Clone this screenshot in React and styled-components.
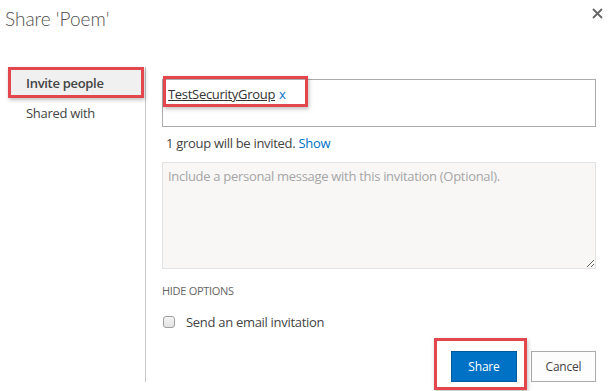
import React, { useState } from "react";
import styled, { createGlobalStyle } from "styled-components";

const GlobalStyle = createGlobalStyle`
    html, body {
        margin: 0;
        padding: 0;
        background: #fff;
        width: 611px;
        height: 391px;
        overflow: hidden;
    }

    body {
        font-family: "Segoe UI", "Open Sans", sans-serif;
        letter-spacing: -0.3px;
        color: #444;
    }
`

const Dialog = styled.div`
    width: 611px;
    height: 391px;
    display: flex;
    flex-direction: column;
    box-sizing: border-box;
`

const Header = styled.div`
    height: 67px;
    display: flex;
    justify-content: space-between;
    align-items: flex-start;
    padding: 6px 8px 0 5px;
    box-sizing: border-box;
`

const Title = styled.h1`
    margin: 0;
    font-family: "Segoe UI Light", "Lato", sans-serif;
    font-size: 19px;
    font-weight: 300;
    letter-spacing: 0;
    line-height: 26px;
    color: #505050;
`

const CloseButton = styled.button`
    border: none;
    background: none;
    padding: 0;
    margin-top: 1px;
    width: 12px;
    height: 12px;
    display: flex;
    align-items: center;
    justify-content: center;
    cursor: pointer;
`

const Body = styled.div`
    display: flex;
    height: 315px;
`

const Nav = styled.nav`
    width: 145px;
    border-right: 1px solid #c6c6c6;
    display: flex;
    flex-direction: column;
`

const NavItem = styled.div`
    position: relative;
    margin-left: 8px;
    width: 136px;
    height: ${props => props.active ? "31px" : "29px"};
    padding-left: 18px;
    box-sizing: border-box;
    display: flex;
    align-items: center;
    font-size: 13px;
    font-weight: ${props => props.active ? 600 : 400};
    color: #444;
    background: ${props => props.active ? "#f0f0f0" : "transparent"};
`

const Highlight = styled.span`
    position: absolute;
    pointer-events: none;
    border: 3px solid #e2474d;
    box-sizing: border-box;
    box-shadow: 1px 2px 4px rgba(0, 0, 0, 0.25);
`

const Content = styled.div`
    flex: 1;
    padding: 12px 15px 0 16px;
    display: flex;
    flex-direction: column;
`

const PeopleBox = styled.div`
    position: relative;
    height: 48px;
    border: 1px solid #ababab;
    box-sizing: border-box;
    padding: 5px 5px;
    font-size: 13px;
    line-height: 18px;
`

const Token = styled.span`
    color: #333;
    text-decoration: underline;
`

const RemoveLink = styled.a`
    color: #0072c6;
    margin-left: 4px;
    text-decoration: none;
    cursor: pointer;
`

const Status = styled.div`
    margin-top: 6px;
    padding-left: 4px;
    font-size: 13px;
    line-height: 20px;
    color: #444;
`

const Link = styled.a`
    color: #0072c6;
    cursor: pointer;
`

const Message = styled.textarea`
    margin-top: 9px;
    height: 107px;
    box-sizing: border-box;
    border: 1px solid #e3e3e3;
    background: #f8f7f6;
    padding: 4px 5px;
    font-family: "Segoe UI", "Open Sans", sans-serif;
    font-size: 13px;
    letter-spacing: -0.3px;
    line-height: 18px;
    color: #444;
    resize: vertical;
    outline: none;

    &::placeholder {
        color: #a6a6a6;
    }
`

const OptionsToggle = styled.div`
    margin-top: 14px;
    font-size: 11px;
    line-height: 16px;
    color: #666;
    text-transform: uppercase;
`

const CheckRow = styled.label`
    margin-top: 13px;
    display: flex;
    align-items: center;
    font-size: 13px;
    line-height: 20px;
    color: #444;
`

const Check = styled.input`
    appearance: none;
    margin: 0 11px 0 1px;
    width: 12px;
    height: 12px;
    border: 1px solid #a0a0a0;
    border-radius: 3px;
    background: linear-gradient(#f4f4f4, #e2e2e2);
    box-sizing: border-box;
`

const ButtonRow = styled.div`
    margin-top: 19px;
    display: flex;
    justify-content: flex-end;
    gap: 14px;
`

const ButtonWrap = styled.span`
    position: relative;
    display: flex;
`

const Button = styled.button`
    width: ${props => props.primary ? "66px" : "65px"};
    height: 31px;
    font-family: "Segoe UI", "Open Sans", sans-serif;
    font-size: 12px;
    letter-spacing: -0.2px;
    border: 1px solid ${props => props.primary ? "#005a9e" : "#ababab"};
    background: ${props => props.primary ? "#0072c6" : "#fdfdfd"};
    color: ${props => props.primary ? "#fff" : "#444"};
    padding: 0;
    cursor: pointer;
`

function App() {
    const [message, setMessage] = useState("");
    const [sendEmail, setSendEmail] = useState(false);

    return (
        <Dialog>
            <GlobalStyle />
            <Header>
                <Title>Share 'Poem'</Title>
                <CloseButton aria-label="Close">
                    <svg width="11" height="11" viewBox="0 0 11 11">
                        <path d="M1 1 L10 10 M10 1 L1 10" stroke="#666" strokeWidth="1.8" />
                    </svg>
                </CloseButton>
            </Header>
            <Body>
                <Nav>
                    <NavItem active>
                        Invite people
                        <Highlight style={{ left: 0, top: 0, right: 0, bottom: 0 }} />
                    </NavItem>
                    <NavItem>Shared with</NavItem>
                </Nav>
                <Content>
                    <PeopleBox>
                        <Token>TestSecurityGroup</Token>
                        <RemoveLink>x</RemoveLink>
                        <Highlight style={{ left: 0, top: -4, width: 145, height: 31 }} />
                    </PeopleBox>
                    <Status>
                        1 group will be invited. <Link>Show</Link>
                    </Status>
                    <Message
                        value={message}
                        onChange={evt => setMessage(evt.target.value)}
                        placeholder="Include a personal message with this invitation (Optional)."
                    />
                    <OptionsToggle>Hide options</OptionsToggle>
                    <CheckRow>
                        <Check
                            type="checkbox"
                            checked={sendEmail}
                            onChange={evt => setSendEmail(evt.target.checked)}
                        />
                        Send an email invitation
                    </CheckRow>
                    <ButtonRow>
                        <ButtonWrap>
                            <Button primary>Share</Button>
                            <Highlight style={{ left: -17, top: -13, right: -10, bottom: -8 }} />
                        </ButtonWrap>
                        <Button>Cancel</Button>
                    </ButtonRow>
                </Content>
            </Body>
        </Dialog>
    );
}

export default App;
